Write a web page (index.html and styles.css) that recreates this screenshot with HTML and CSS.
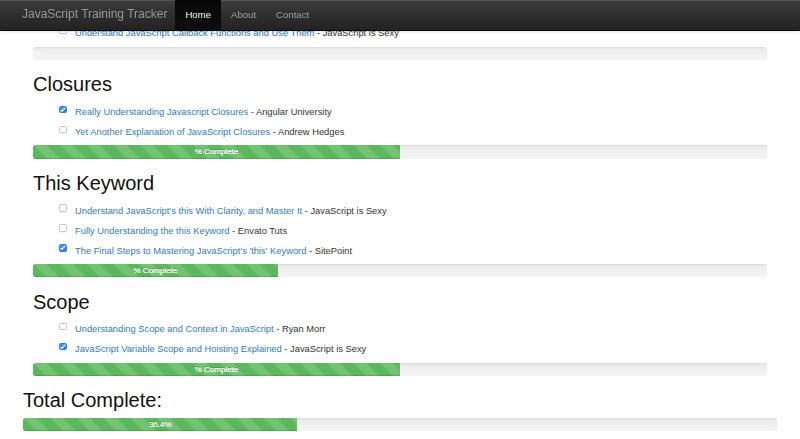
FILE: index.html
```html
<!DOCTYPE html>
<html lang="en">
<head>
<meta charset="utf-8">
<title>JavaScript Training Tracker</title>
<link rel="stylesheet" href="styles.css">
</head>
<body>
<nav class="navbar">
  <div class="nav-inner">
    <a class="brand" href="#">JavaScript Training Tracker</a>
    <ul class="nav">
      <li class="active"><a href="#">Home</a></li>
      <li><a href="#">About</a></li>
      <li><a href="#">Contact</a></li>
    </ul>
  </div>
</nav>

<main class="container">
  <section class="topic">
    <ul class="items">
      <li><span class="cb"></span><span><a href="#">Understand JavaScript Callback Functions and Use Them</a> - JavaScript is Sexy</span></li>
    </ul>
    <div class="progress"><div class="bar" style="width:0%"><span class="clip">%</span></div></div>
  </section>

  <section class="topic">
    <h2>Closures</h2>
    <ul class="items">
      <li><span class="cb checked"><svg viewBox="0 0 8 8"><path d="M1.6 4.1 L3.2 5.8 L6.4 1.9"/></svg></span><span><a href="#">Really Understanding Javascript Closures</a> - Angular University</span></li>
      <li><span class="cb"></span><span><a href="#">Yet Another Explanation of JavaScript Closures</a> - Andrew Hedges</span></li>
    </ul>
    <div class="progress"><div class="bar" style="width:50%">% Complete</div></div>
  </section>

  <section class="topic">
    <h2>This Keyword</h2>
    <ul class="items">
      <li><span class="cb"></span><span><a href="#">Understand JavaScript's this With Clarity, and Master It</a> - JavaScript is Sexy</span></li>
      <li><span class="cb"></span><span><a href="#">Fully Understanding the this Keyword</a> - Envato Tuts</span></li>
      <li><span class="cb checked"><svg viewBox="0 0 8 8"><path d="M1.6 4.1 L3.2 5.8 L6.4 1.9"/></svg></span><span><a href="#">The Final Steps to Mastering JavaScript's 'this' Keyword</a> - SitePoint</span></li>
    </ul>
    <div class="progress"><div class="bar" style="width:33.33%">% Complete</div></div>
  </section>

  <section class="topic">
    <h2>Scope</h2>
    <ul class="items">
      <li><span class="cb"></span><span><a href="#">Understanding Scope and Context in JavaScript</a> - Ryan Morr</span></li>
      <li><span class="cb checked"><svg viewBox="0 0 8 8"><path d="M1.6 4.1 L3.2 5.8 L6.4 1.9"/></svg></span><span><a href="#">JavaScript Variable Scope and Hoisting Explained</a> - JavaScript is Sexy</span></li>
    </ul>
    <div class="progress"><div class="bar" style="width:50%">% Complete</div></div>
  </section>

  <h2 class="total-title">Total Complete:</h2>
  <div class="progress"><div class="bar" style="width:36.4%">36.4%</div></div>
</main>
</body>
</html>
```

FILE: styles.css
```css
* { box-sizing: border-box; }

html, body {
  margin: 0;
  padding: 0;
  background: #fff;
}

body {
  font-family: "Liberation Sans", Arial, Helvetica, sans-serif;
  font-size: 9.33px;
  color: #333;
}

a { text-decoration: none; }

/* navbar */
.navbar {
  position: fixed;
  top: 0;
  left: 0;
  right: 0;
  height: 31px;
  z-index: 10;
  background: linear-gradient(to bottom, #3c3c3c 0, #222 100%);
  border-bottom: 1px solid #080808;
  box-shadow: inset 0 1px 0 rgba(255,255,255,.15), 0 1px 4px rgba(0,0,0,.12);
}

.nav-inner {
  display: flex;
  align-items: stretch;
  height: 30px;
  padding-left: 22px;
}

.brand {
  display: flex;
  align-items: center;
  padding-right: 8px;
  font-size: 12px;
  line-height: 13.33px;
  color: #9d9d9d;
  text-shadow: 0 1px 0 rgba(0,0,0,.25);
}

.nav {
  display: flex;
  list-style: none;
  margin: 0;
  padding: 0;
}

.nav li a {
  display: flex;
  align-items: center;
  height: 30px;
  padding: 0 10px;
  font-size: 9.6px;
  line-height: 13.33px;
  color: #a5a5a5;
  text-shadow: 0 -1px 0 rgba(0,0,0,.25);
}

.nav li.active a {
  color: #fff;
  background: linear-gradient(to bottom, #080808 0, #0f0f0f 100%);
  box-shadow: inset 0 3px 9px rgba(0,0,0,.25);
}

/* content */
.container {
  padding: 23.33px 23px 20px;
}

.topic {
  padding: 0 10px;
}

h2 {
  font-size: 20px;
  line-height: 22px;
  font-weight: 400;
  color: #111;
  margin: 13.33px 0 6.67px;
}

.items {
  list-style: none;
  margin: 0 0 3.33px;
  padding: 0 0 0 26px;
}

.items li {
  display: flex;
  align-items: flex-start;
  line-height: 20px;
  white-space: nowrap;
}

.items li a { color: #337ab7; }

.cb {
  flex: none;
  width: 7.5px;
  height: 7.5px;
  margin: 3.6px 8.5px 0 0;
  border: 1px solid #c6c6c6;
  border-radius: 1.5px;
  background: #fff;
  box-shadow: 0 0.5px 1px rgba(0,0,0,.06);
  position: relative;
}

.cb.checked {
  border-color: #2a78e4;
  background: linear-gradient(to bottom, #4a98f7 0, #2a7ae6 100%);
}

.cb svg {
  position: absolute;
  left: -1px;
  top: -1px;
  width: 7.5px;
  height: 7.5px;
  fill: none;
  stroke: #fff;
  stroke-width: 1.3;
}

/* progress */
.progress {
  height: 13.33px;
  margin-bottom: 13.33px;
  overflow: hidden;
  border-radius: 2.67px;
  background: linear-gradient(to bottom, #ebebeb 0, #f5f5f5 100%);
  box-shadow: inset 0 1px 2px rgba(0,0,0,.08);
}

.bar {
  height: 100%;
  font-size: 8px;
  line-height: 13.33px;
  color: #fff;
  text-align: center;
  white-space: nowrap;
  text-shadow: 0 -1px 0 rgba(0,0,0,.3), 0 0 0.4px #fff;
  background-color: #5cb85c;
  background-image: linear-gradient(45deg,
    rgba(255,255,255,.15) 25%, transparent 25%,
    transparent 50%, rgba(255,255,255,.15) 50%,
    rgba(255,255,255,.15) 75%, transparent 75%, transparent);
  background-size: 26.67px 26.67px;
  box-shadow: inset 0 -1px 0 rgba(0,0,0,.15);
}

.clip {
  display: inline-block;
  margin-left: 0;
  text-shadow: none;
  color: rgba(255,255,255,.9);
}

.total-title {
  margin-top: 13.33px;
}
```
